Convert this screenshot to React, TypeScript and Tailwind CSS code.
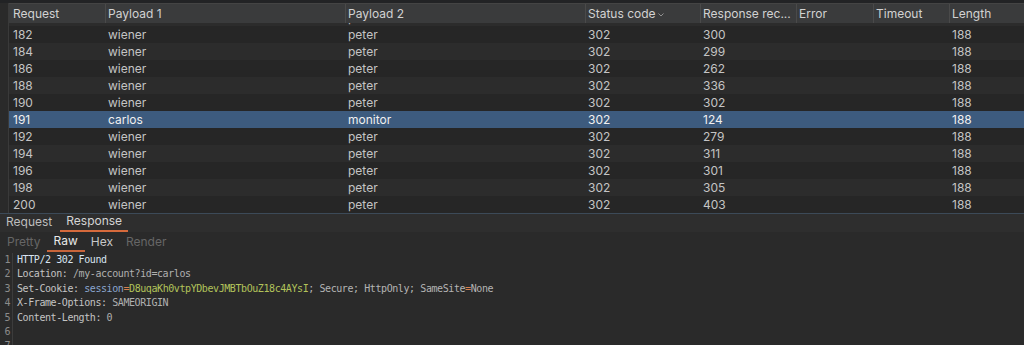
import React from 'react';

type Row = { req: string; p1: string; p2: string; status: string; time: string; len: string };

const rows: Row[] = [
  { req: '182', p1: 'wiener', p2: 'peter', status: '302', time: '300', len: '188' },
  { req: '184', p1: 'wiener', p2: 'peter', status: '302', time: '299', len: '188' },
  { req: '186', p1: 'wiener', p2: 'peter', status: '302', time: '262', len: '188' },
  { req: '188', p1: 'wiener', p2: 'peter', status: '302', time: '336', len: '188' },
  { req: '190', p1: 'wiener', p2: 'peter', status: '302', time: '302', len: '188' },
  { req: '191', p1: 'carlos', p2: 'monitor', status: '302', time: '124', len: '188' },
  { req: '192', p1: 'wiener', p2: 'peter', status: '302', time: '279', len: '188' },
  { req: '194', p1: 'wiener', p2: 'peter', status: '302', time: '311', len: '188' },
  { req: '196', p1: 'wiener', p2: 'peter', status: '302', time: '301', len: '188' },
  { req: '198', p1: 'wiener', p2: 'peter', status: '302', time: '305', len: '188' },
  { req: '200', p1: 'wiener', p2: 'peter', status: '302', time: '403', len: '188' },
];

const cols = 'grid grid-cols-[97px_240px_240px_115px_96px_77px_76px_1fr]';

const TableRow: React.FC<{ row: Row; index: number }> = ({ row, index }) => {
  const selected = row.req === '191';
  const bg = selected ? 'bg-[#3d5b7e] text-[#f0f0f0]' : index % 2 === 0 ? 'bg-[#262626] text-[#c4c4c4]' : 'bg-[#2c2c2c] text-[#c4c4c4]';
  return (
    <div className={`${cols} h-[17px] items-center ${bg}`}>
      <span className="pl-[4px]">{row.req}</span>
      <span className="pl-[2px]">{row.p1}</span>
      <span className="pl-[2px]">{row.p2}</span>
      <span className="pl-[2px]">{row.status}</span>
      <span className="pl-[2px]">{row.time}</span>
      <span className="pl-[2px]"></span>
      <span className="pl-[2px]"></span>
      <span className="pl-[2px]">{row.len}</span>
    </div>
  );
};

export default function App() {
  const headers = ['Request', 'Payload 1', 'Payload 2', 'Status code', 'Response rec...', 'Error', 'Timeout', 'Length'];

  return (
    <div className="w-[1024px] h-[345px] overflow-hidden bg-[#2a2a2a] flex flex-col font-['Inter','Noto_Sans',sans-serif] text-[12px]">
      {/* top strip */}
      <div className="h-[3px] bg-[#222325] shrink-0" />

      {/* results table */}
      <div className="ml-[8px] border-l border-[#3a3a3a] flex flex-col shrink-0">
        <div className={`${cols} h-[20px] items-center bg-[#3a3b3c] text-[#d2d2d2] border-t border-[#444] relative z-10`}>
          {headers.map((h, i) => (
            <span
              key={h}
              className={`${i === 0 ? 'pl-[4px]' : 'pl-[2px]'} h-full flex items-center ${i < headers.length - 1 ? 'border-r border-[#4a4a4a]' : ''}`}
            >
              {h}
              {h === 'Status code' && (
                <svg width="6" height="4" viewBox="0 0 6 4" className="ml-[2px] mt-[2px]">
                  <path d="M0.5 0.5 L3 3 L5.5 0.5" stroke="#9a9a9a" strokeWidth="0.9" fill="none" />
                </svg>
              )}
            </span>
          ))}
        </div>
        {/* sliver of the row scrolled under the header */}
        <div className="h-[3px] overflow-hidden bg-[#2c2c2c] text-[#c4c4c4]" aria-hidden="true">
          <div className={`${cols} h-[17px] items-center -mt-[14px]`}>
            <span className="pl-[4px]">180</span>
            <span className="pl-[2px]">wiener</span>
            <span className="pl-[2px]">peter</span>
            <span className="pl-[2px]">302</span>
            <span className="pl-[2px]">310</span>
            <span />
            <span />
            <span className="pl-[2px]">188</span>
          </div>
        </div>
        {rows.map((r, i) => (
          <TableRow key={r.req} row={r} index={i} />
        ))}
      </div>

      <div className="h-px bg-[#3c4a58] shrink-0" />

      {/* request / response tabs */}
      <div className="h-[18px] bg-[#2e2e2e] flex items-end gap-[14px] pl-[6px] shrink-0 text-[12px]">
        <span className="text-[#bdbdbd] pb-[1px]">Request</span>
        <span className="text-[#d4d4d4] border-b-2 border-[#d66a3c] px-[6px] -ml-[6px]">Response</span>
      </div>

      {/* view tabs */}
      <div className="h-[20px] flex items-end gap-[13px] pl-[7px] shrink-0 text-[12px]">
        <span className="text-[#666] pb-[1px]">Pretty</span>
        <span className="text-[#e8e8e8] border-b-2 border-[#c8643a] px-[7px] -mx-[7px]">Raw</span>
        <span className="text-[#c8c8c8] pb-[1px]">Hex</span>
        <span className="text-[#666] pb-[1px]">Render</span>
      </div>

      {/* raw editor */}
      <div className="flex font-['DejaVu_Sans_Mono',monospace] text-[10px] tracking-[-0.42px] leading-[14.4px] pt-[1px]">
        <div className="w-[13px] text-right pr-[2px] text-[#8c8c8c] border-r border-[#3c3c3c]">
          {[1, 2, 3, 4, 5, 6, 7].map((n) => (
            <div key={n}>{n}</div>
          ))}
        </div>
        <div className="pl-[4px] text-[#c4c4c4] whitespace-pre">
          <div className="text-[#d8e4f0]">HTTP/2 302 Found</div>
          <div>
            Location: <span className="text-[#b0b0b0]">/my-account?id=carlos</span>
          </div>
          <div>
            Set-Cookie: <span className="text-[#8aa6cf]">session</span>
            <span className="text-[#d9804f]">=</span>
            <span className="text-[#b2c35a]">D8uqaKh0vtpYDbevJMBTbOuZ18c4AYsI</span>
            <span className="text-[#b4b4b4]">; Secure; HttpOnly; SameSite</span>
            <span className="text-[#d9804f]">=</span>
            <span className="text-[#b4b4b4]">None</span>
          </div>
          <div>
            X-Frame-Options: <span className="text-[#b0b0b0]">SAMEORIGIN</span>
          </div>
          <div>
            Content-Length: <span className="text-[#b0b0b0]">0</span>
          </div>
          <div>&nbsp;</div>
          <div>&nbsp;</div>
        </div>
      </div>
    </div>
  );
}
